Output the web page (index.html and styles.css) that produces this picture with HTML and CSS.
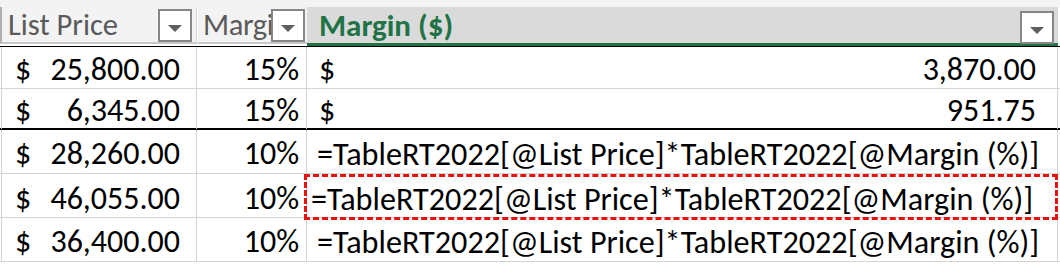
FILE: index.html
```html
<!DOCTYPE html>
<html>
<head>
<meta charset="utf-8">
<link rel="stylesheet" href="styles.css">
</head>
<body>
<div class="sheet">
  <div class="strip"></div>
  <div class="hdr">
    <div class="hcell c1">
      <span class="htext">List Price</span>
      <span class="filter"><span class="tri"></span></span>
    </div>
    <div class="hcell c2">
      <span class="htext clipped">Margin (%)</span>
      <span class="filter"><span class="tri"></span></span>
    </div>
    <div class="hcell c3 sel">
      <span class="htext">Margin ($)</span>
      <span class="filter"><span class="tri"></span></span>
    </div>
  </div>

  <div class="row r1">
    <div class="cell c1 acct"><span>$</span><span>25,800.00</span></div>
    <div class="cell c2 num">15%</div>
    <div class="cell c3 acct wide"><span>$</span><span>3,870.00</span></div>
  </div>
  <div class="row r2 thick">
    <div class="cell c1 acct"><span>$</span><span>6,345.00</span></div>
    <div class="cell c2 num">15%</div>
    <div class="cell c3 acct wide"><span>$</span><span>951.75</span></div>
  </div>
  <div class="row r3">
    <div class="cell c1 acct"><span>$</span><span>28,260.00</span></div>
    <div class="cell c2 num">10%</div>
    <div class="cell c3 formula">=TableRT2022[@List Price]*TableRT2022[@Margin (%)]</div>
  </div>
  <div class="row r3">
    <div class="cell c1 acct"><span>$</span><span>46,055.00</span></div>
    <div class="cell c2 num">10%</div>
    <div class="cell c3 formula editing">=TableRT2022[@List Price]*TableRT2022[@Margin (%)]</div>
  </div>
  <div class="row r3">
    <div class="cell c1 acct"><span>$</span><span>36,400.00</span></div>
    <div class="cell c2 num">10%</div>
    <div class="cell c3 formula">=TableRT2022[@List Price]*TableRT2022[@Margin (%)]</div>
  </div>
</div>
</body>
</html>
```

FILE: styles.css
```css
html, body {
  margin: 0;
  padding: 0;
  background: #ffffff;
}

.sheet {
  width: 1060px;
  height: 264px;
  overflow: hidden;
  font-family: "Carlito", "Lato", "Liberation Sans", sans-serif;
  color: #000;
}

.strip {
  height: 7px;
  background: #f3f3f3;
}

.hdr {
  display: grid;
  grid-template-columns: 197px 110px 751px 2px;
  height: 40px;
  border-bottom: 1px solid #000;
  background: #fff;
  box-sizing: border-box;
}

.hcell {
  display: flex;
  align-items: flex-end;
  height: 37px;
  background: #f3f3f3;
  border-bottom: 2px solid #c8c8c8;
  box-sizing: border-box;
  padding-left: 8px;
  padding-right: 4px;
}

.hdr .c1 {
  border-left: 2px solid #b0b0b0;
  padding-left: 6px;
  border-right: 1px solid #d6d6d6;
}

.hdr .c2 {
  border-left: 1px solid #fff;
  padding-left: 5px;
  padding-right: 2px;
}

.hdr .sel {
  background: #dadada;
  border-bottom: 3px solid #217346;
  height: 39px;
  padding-left: 12px;
}

.htext {
  flex: 1;
  min-width: 0;
  white-space: nowrap;
  font-size: 30.5px;
  line-height: 35px;
  color: #5a5a5a;
  align-self: center;
}

.htext.clipped {
  overflow: hidden;
  letter-spacing: -0.4px;
}

.sel .htext {
  font-weight: bold;
  font-size: 31px;
  color: #217346;
}

.filter {
  flex: none;
  width: 34px;
  height: 33px;
  box-sizing: border-box;
  background: #fff;
  border: 2px solid #868686;
  display: flex;
  align-items: center;
  justify-content: center;
  padding-top: 6px;
}

.sel .filter {
  height: 33px;
  margin-bottom: -1px;
}

.tri {
  width: 0;
  height: 0;
  border-left: 7px solid transparent;
  border-right: 7px solid transparent;
  border-top: 7px solid #5f5f5f;
}

.row {
  display: grid;
  grid-template-columns: 197px 110px 751px;
  height: 42px;
  border-bottom: 1px solid #d4d4d4;
  box-sizing: border-box;
}

.row.thick {
  height: 41px;
  border-bottom: 2px solid #000;
}

.row.r3 {
  height: 44px;
}

.cell {
  display: flex;
  align-items: center;
  font-size: 32px;
  line-height: 36px;
  white-space: nowrap;
  box-sizing: border-box;
  border-right: 1px solid #d4d4d4;
  padding-top: 4px;
}

.row .c1 {
  border-left: 1px solid #d4d4d4;
  margin-left: 1px;
}

.acct {
  justify-content: space-between;
  padding-left: 13px;
  padding-right: 16px;
}

.acct.wide {
  padding-left: 12px;
  padding-right: 21px;
}

.num {
  justify-content: flex-end;
  padding-right: 7px;
}

.formula {
  padding-left: 10px;
  font-size: 32.2px;
}

.formula.editing {
  border: 3px dashed #e8120c;
  margin-left: -3px;
  margin-bottom: -1px;
  padding-left: 4px;
  position: relative;
  z-index: 1;
}
```
